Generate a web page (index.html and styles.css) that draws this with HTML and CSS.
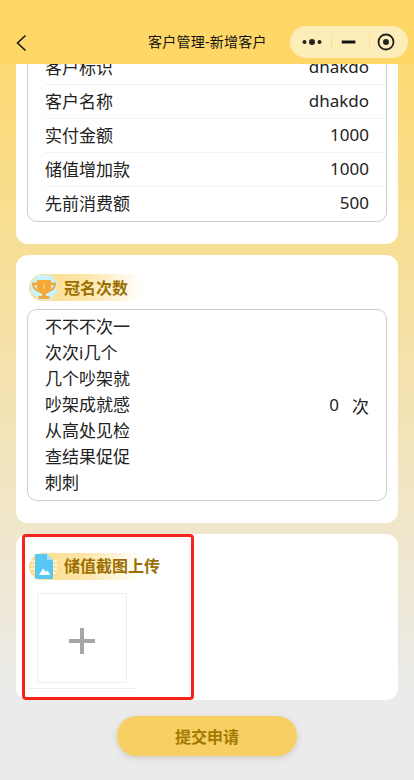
FILE: index.html
```html
<!DOCTYPE html>
<html lang="zh">
<head>
<meta charset="utf-8">
<title>客户管理-新增客户</title>
<link rel="stylesheet" href="styles.css">
</head>
<body>
<div class="page">
  <header class="navbar">
    <svg class="back" viewBox="0 0 12 18" width="12" height="18"><path d="M10.500 1.500 2.500 9l8 7.500" fill="none" stroke="#111" stroke-width="1.500"/></svg>
    <h1 class="nav-title">客户管理-新增客户</h1>
    <div class="capsule">
      <svg class="cap-icon" viewBox="0 0 38 32" width="41" height="32"><circle cx="13" cy="16" r="2" fill="#222"/><circle cx="20.500" cy="16" r="3" fill="#222"/><circle cx="28" cy="16" r="2" fill="#222"/></svg>
      <span class="cap-line"></span>
      <svg class="cap-icon" viewBox="0 0 38 32" width="37" height="32"><rect x="10" y="14.500" width="14" height="3" fill="#111"/></svg>
      <span class="cap-line"></span>
      <svg class="cap-icon" viewBox="0 0 38 32" width="38" height="32"><circle cx="16" cy="16" r="7.500" fill="none" stroke="#222" stroke-width="1.800"/><circle cx="16" cy="16" r="3" fill="#222"/></svg>
    </div>
  </header>

  <main class="content">
    <section class="card card-info">
      <div class="box">
        <div class="row"><span>客户标识</span><span>dhakdo</span></div>
        <div class="row"><span>客户名称</span><span>dhakdo</span></div>
        <div class="row"><span>实付金额</span><span>1000</span></div>
        <div class="row"><span>储值增加款</span><span>1000</span></div>
        <div class="row"><span>先前消费额</span><span>500</span></div>
      </div>
    </section>

    <section class="card card-naming">
      <div class="pill">
        <svg class="pill-icon" viewBox="0 0 30 27" width="30" height="27">
          <path d="M4 6 8 1h14l4 4 3 5-2 4 2 4-4 3-3 5H9l-3-4-5-3 1-5-1-4z" fill="#c9f2f9"/>
          <path d="M8 6h14v2.500h5c0 5.500-2.500 8.500-7 9.500-1 1-2 1.500-3 1.700V22h3.500v3h-11v-3H13v-2.300c-1-.2-2-.7-3-1.700-4.500-1-7-4-7-9.500h5zM5.500 11c.4 2.300 1.400 3.500 3 4.200-.4-1.300-.6-2.700-.7-4.200zM24.500 11h-2.300c-.1 1.500-.3 2.900-.7 4.200 1.600-.7 2.600-1.900 3-4.200z" fill="#f4a638"/>
          <path d="M14.300 10l1.400-1V15h-1.400z" fill="#fbd35e"/>
        </svg>
        <span class="pill-text">冠名次数</span>
      </div>
      <div class="box box-naming">
        <p class="naming-text">不不不次一次次i几个几个吵架就吵架成就感从高处见检查结果促促刺刺</p>
        <div class="naming-count"><span>0</span><span>次</span></div>
      </div>
    </section>

    <section class="card card-upload">
      <div class="pill">
        <svg class="pill-icon" viewBox="0 0 30 27" width="30" height="27">
          <path d="M1 8h5M2 12h4M1 16h5M24 8h4M24 12h5M24 16h4M24 20h3" stroke="#fff" stroke-width="1.500" opacity=".8"/>
          <path d="M7 1h11l6 6v18a1 1 0 0 1-1 1H7a1 1 0 0 1-1-1V2a1 1 0 0 1 1-1z" fill="#56c8f3"/>
          <path d="M18 1l6 6h-6z" fill="#a5e2f9"/>
          <path d="M10 22l4-6.500 3 3.500 1.500-1.500 3 4.500z" fill="#fff"/>
        </svg>
        <span class="pill-text">储值截图上传</span>
      </div>
      <div class="upload">
        <svg viewBox="0 0 26 26" width="26" height="26"><path d="M11 0h4v11h11v4H15v11h-4V15H0v-4h11z" fill="#a6a6a6"/></svg>
      </div>
      <div class="upload-rule"></div>
      <div class="highlight"></div>
    </section>
  </main>

  <footer class="footer">
    <button class="submit" type="button">提交申请</button>
  </footer>
</div>
</body>
</html>
```

FILE: styles.css
```css
* { box-sizing: border-box; }
html, body { margin: 0; height: 100%; }
body {
  font-family: "Noto Sans", "Noto Sans CJK SC", sans-serif;
  color: #222;
}
.page {
  width: 414px;
  height: 780px;
  display: flex;
  flex-direction: column;
  overflow: hidden;
  background: linear-gradient(180deg, #fed868 0%, #ebebeb 90%);
}
.navbar {
  flex: none;
  height: 64px;
  background: #ffd766;
  display: flex;
  align-items: flex-end;
  position: relative;
  z-index: 2;
  padding: 0 6px 6px 15px;
}
.back { margin-bottom: 6px; flex: none; }
.nav-title {
  margin: 0 0 8px;
  width: 263px;
  padding-left: 121px;
  white-space: nowrap;
  font-size: 14px;
  line-height: 17px;
  font-weight: 400;
  letter-spacing: .25px;
  color: #111;
}
.capsule {
  width: 118px;
  height: 32px;
  border-radius: 16px;
  background: #fdedb8;
  display: flex;
  align-items: center;
  flex: none;
}
.cap-icon { flex: none; }
.cap-line { width: 1px; height: 16px; background: #f3e0a6; flex: none; }
.content {
  flex: 1;
  min-height: 0;
  overflow: hidden;
  padding: 0 16px;
  display: flex;
  flex-direction: column;
  gap: 11px;
}
.card {
  background: #fff;
  border-radius: 12px;
  padding: 19px 11px 22px;
  position: relative;
  flex: none;
}
.card-info { margin-top: -33px; }
.card-upload { padding-bottom: 0; height: 166px; }
.box {
  border: 1px solid #ccc;
  border-radius: 10px;
}
.row {
  height: 34px;
  margin-left: 17px;
  padding: 0 17px 2px 0;
  display: flex;
  justify-content: space-between;
  align-items: center;
  border-bottom: 1px solid #f2f2f2;
  font-size: 17px;
}
.row:last-child { border-bottom: 0; padding-bottom: 3px; }
.pill {
  height: 27px;
  width: 112px;
  margin-left: 2px;
  border-radius: 14px 0 0 14px;
  background: linear-gradient(90deg, #fddc8c 0%, #fde5a8 50%, #ffffff 100%);
  display: flex;
  align-items: center;
  white-space: nowrap;
}
.pill-icon { flex: none; margin-right: 5px; }
.pill-text {
  padding-bottom: 2px;
  font-size: 16px;
  font-weight: 700;
  color: #9b7000;
}
.card-upload .pill-text { padding-bottom: 3px; }
.box-naming {
  margin-top: 8px;
  height: 192px;
  padding: 4px 17px;
  display: flex;
  justify-content: space-between;
  align-items: center;
  font-size: 17px;
}
.naming-text {
  margin: 0;
  width: 87px;
  line-height: 26px;
}
.naming-count { display: flex; gap: 13px; }
.upload {
  width: 90px;
  height: 90px;
  margin: 13px 0 0 10px;
  padding-top: 6px;
  border: 1px solid #eee;
  display: flex;
  align-items: center;
  justify-content: center;
}
.upload-rule {
  width: 110px;
  height: 1px;
  margin-top: 5px;
  background: #eee;
}
.highlight {
  position: absolute;
  left: 6px;
  top: 0;
  width: 172px;
  height: 166px;
  border: 3px solid #f5231c;
  border-radius: 4px;
  pointer-events: none;
}
.footer {
  flex: none;
  height: 80px;
  padding-top: 16px;
  display: flex;
  justify-content: center;
}
.submit {
  width: 180px;
  height: 40px;
  border: 0;
  border-radius: 20px;
  background: #f7cf63;
  box-shadow: 0 2px 6px rgba(120, 100, 50, .22);
  font-family: inherit;
  font-size: 16px;
  font-weight: 700;
  color: #a07a00;
  padding: 0;
}
```
